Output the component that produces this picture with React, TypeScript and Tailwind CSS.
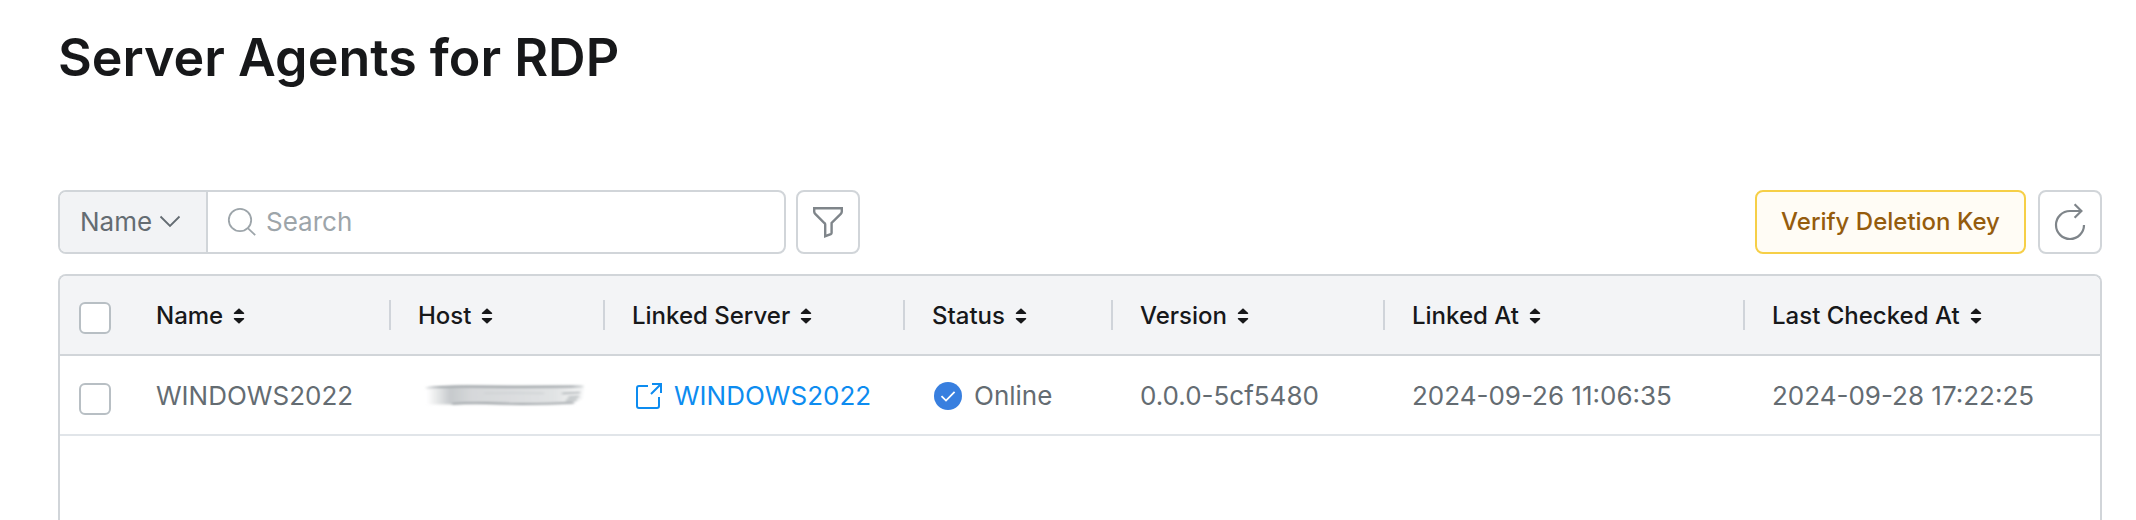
import type { ReactNode } from 'react';

function SortIcon() {
  return (
    <svg className="ml-[10px] shrink-0" width="12" height="16" viewBox="0 0 12 16" fill="#17181a">
      <path d="M6 0.2 11.2 5 Q11.4 5.9 10.6 5.9 H1.4 Q0.6 5.9 0.8 5Z" />
      <path d="M6 15.8 11.2 11 Q11.4 10.1 10.6 10.1 H1.4 Q0.6 10.1 0.8 11Z" />
    </svg>
  );
}

function Checkbox() {
  return <span className="block size-8 rounded-[6px] border-2 border-[#b8bfc4] bg-white" />;
}

function HeaderCell({ label, last = false }: { label: string; last?: boolean }) {
  return (
    <div className="flex items-center justify-between text-2xl font-medium text-[#17181a]">
      <span className="flex items-center whitespace-nowrap pt-[2px]">
        {label}
        <SortIcon />
      </span>
      {!last && <span className="h-[30px] w-[2px] bg-[#d0d4da]" />}
    </div>
  );
}

function Cell({ children }: { children?: ReactNode }) {
  return <div className="flex items-center whitespace-nowrap text-[26px] text-[#646c72]">{children}</div>;
}

function SmudgedHost() {
  return (
    <svg className="ml-[4px]" width="166" height="24" viewBox="0 0 166 24" fill="none">
      <defs>
        <linearGradient id="smudge" x1="0" x2="166" y1="0" y2="0" gradientUnits="userSpaceOnUse">
          <stop offset="0.03" stopColor="#c6cacd" stopOpacity="0" />
          <stop offset="0.17" stopColor="#c6cacc" />
          <stop offset="0.3" stopColor="#d6d8da" />
          <stop offset="0.5" stopColor="#dadcde" />
          <stop offset="0.8" stopColor="#e1e3e4" />
          <stop offset="0.97" stopColor="#e8eaeb" stopOpacity="0.5" />
        </linearGradient>
        <linearGradient id="edge" x1="0" x2="166" y1="0" y2="0" gradientUnits="userSpaceOnUse">
          <stop offset="0" stopColor="#8e959a" stopOpacity="0" />
          <stop offset="0.12" stopColor="#9ba1a5" />
          <stop offset="0.9" stopColor="#9ba1a5" />
          <stop offset="1" stopColor="#9ba1a5" stopOpacity="0" />
        </linearGradient>
        <filter id="soft" x="-5%" y="-30%" width="110%" height="160%">
          <feGaussianBlur stdDeviation="1.6 0.8" />
        </filter>
      </defs>
      <g filter="url(#soft)">
        <path d="M2 4 L46 2 H162 L160 16 L150 21.6 H4Z" fill="url(#smudge)" />
        <path d="M4 5 Q20 3 46 3.6 T100 4 T161 3.4" stroke="url(#edge)" strokeWidth="2" />
        <path d="M30 20.8 Q48 19.4 64 20 T100 21 Q130 20.8 152 19.6" stroke="url(#edge)" strokeWidth="1.8" />
        <path d="M62 10.4 Q90 9.4 122 10.4" stroke="#ccd0d2" strokeWidth="1.4" />
        <path d="M140 10.5 L158 9.5 M146 14.5 L157 13.5 M144 17.5 L155 16.5" stroke="#a8aeb1" strokeWidth="1.6" />
      </g>
    </svg>
  );
}

const columns = 'grid h-full grid-cols-[96px_235px_214px_300px_208px_272px_360px_auto]';

export default function App() {
  return (
    <div className="flex h-[520px] flex-col overflow-hidden bg-white pl-[58px] pr-[34px] font-['Inter',sans-serif]">
      <h1 className="mt-[25px] h-[66px] whitespace-nowrap text-[52px] font-semibold leading-[65px] text-[#17181a]">
        Server Agents for RDP
      </h1>

      <div className="mt-[99px] flex h-16 shrink-0 items-stretch">
        <div className="flex w-[728px] overflow-hidden rounded-lg border-2 border-[#d1d5d9]">
          <div className="flex w-[148px] items-center border-r-2 border-[#d1d5d9] bg-[#f2f3f5] pl-[20px] text-[26px] text-[#646c72]">
            <span className="pb-[2px]">Name</span>
            <svg className="ml-[7px]" width="22" height="14" viewBox="0 0 22 14" fill="none" stroke="#646c72" strokeWidth="1.8">
              <path d="M1.5 1.5 11 11 20.5 1.5" />
            </svg>
          </div>
          <div className="flex flex-1 items-center pl-[19px] text-[26px] text-[#9da5aa]">
            <svg className="mr-[9px]" width="30" height="30" viewBox="0 0 30 30" fill="none" stroke="#9da5aa" strokeWidth="1.8">
              <circle cx="13" cy="13" r="11.2" />
              <path d="M20.8 21.2 28.2 28.2" />
            </svg>
            <span className="pb-[2px]">Search</span>
          </div>
        </div>

        <div className="ml-[10px] flex w-16 items-center justify-center rounded-lg border-2 border-[#d1d5d9]">
          <svg width="32" height="32" viewBox="0 0 32 32" fill="none" stroke="#7f858a" strokeWidth="2.4">
            <path d="M2.2 2.2 H29.8 V5.4 Q29.8 6.8 28.8 7.8 L19.6 17 V26.8 Q19.6 27.8 18.8 28.2 L13.2 30.2 V18.6 Q13.2 17.6 12.4 17 L3.2 7.8 Q2.2 6.8 2.2 5.4Z" />
          </svg>
        </div>

        <div className="ml-auto flex w-[271px] items-center justify-center whitespace-nowrap rounded-lg border-2 border-[#f6cf47] bg-[#fffcf5] text-2xl font-medium text-[#955c0d]">
          Verify Deletion Key
        </div>
        <div className="ml-3 flex w-16 items-center justify-center rounded-lg border-2 border-[#d1d5d9]">
          <svg width="32" height="38" viewBox="0 0 32 38" fill="none" stroke="#7f858a" strokeWidth="2.2">
            <path d="M27 8 H16 A14 14 0 1 0 30 22" />
            <path d="M20.6 1.2 27.4 8 20.6 14.8" />
          </svg>
        </div>
      </div>

      <div className="mt-5 flex flex-1 flex-col rounded-t-lg border-x-2 border-t-2 border-[#d1d5d9]">
        <div className="h-20 rounded-t-[6px] border-b-2 border-[#d1d5d9] bg-[#f3f4f6]">
          <div className={columns}>
            <div className="flex items-center pl-[19px] pt-[6px]">
              <Checkbox />
            </div>
            <HeaderCell label="Name" />
            <div className="grid pl-[27px]"><HeaderCell label="Host" /></div>
            <div className="grid pl-[27px]"><HeaderCell label="Linked Server" /></div>
            <div className="grid pl-[27px]"><HeaderCell label="Status" /></div>
            <div className="grid pl-[27px]"><HeaderCell label="Version" /></div>
            <div className="grid pl-[27px]"><HeaderCell label="Linked At" /></div>
            <div className="grid pl-[27px]"><HeaderCell label="Last Checked At" last /></div>
          </div>
        </div>

        <div className="h-20 border-b-2 border-[#e1e5e9]">
          <div className={columns}>
            <div className="flex items-center pl-[19px] pt-[8px]">
              <Checkbox />
            </div>
            <Cell>WINDOWS2022</Cell>
            <div className="grid pl-[27px]">
              <Cell>
                <SmudgedHost />
              </Cell>
            </div>
            <div className="grid pl-[27px]">
              <Cell>
                <span className="flex items-center text-[#0d8cf0]">
                  <svg className="ml-[3px] mr-[11px] mt-[2px]" width="28" height="28" viewBox="0 0 28 28" fill="none" stroke="#0d8cf0" strokeWidth="2">
                    <path d="M13 4 H4 Q2 4 2 6 V24 Q2 26 4 26 H22 Q24 26 24 24 V15" />
                    <path d="M17 2 H26 V11 M26 2 16 12" />
                  </svg>
                  WINDOWS2022
                </span>
              </Cell>
            </div>
            <div className="grid pl-[27px]">
              <Cell>
                <svg className="ml-[2px] mr-[12px] mt-[2px]" width="28" height="28" viewBox="0 0 28 28" fill="none">
                  <circle cx="14" cy="14" r="14" fill="#387fdf" />
                  <path d="M7.5 14.2 12 18.6 20.6 9.8" stroke="#ffffff" strokeWidth="1.8" />
                </svg>
                Online
              </Cell>
            </div>
            <div className="grid pl-[27px]"><Cell>0.0.0-5cf5480</Cell></div>
            <div className="grid pl-[27px]"><Cell>2024-09-26 11:06:35</Cell></div>
            <div className="grid pl-[27px]"><Cell>2024-09-28 17:22:25</Cell></div>
          </div>
        </div>
      </div>
    </div>
  );
}
